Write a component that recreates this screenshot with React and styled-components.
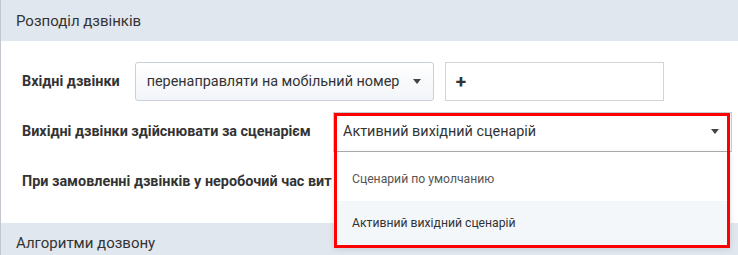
import React from "react";
import styled, { createGlobalStyle } from "styled-components";

const Global = createGlobalStyle`
  html, body { margin: 0; padding: 0; background: #fff; }
  body { font-family: Roboto, "Noto Sans", sans-serif; color: #333; }
  * { box-sizing: border-box; }
`;

const Page = styled.div`
  width: 738px;
  height: 255px;
  overflow: hidden;
  border-left: 1px solid #c3c8ce;
  display: flex;
  flex-direction: column;
`;

const SectionHeader = styled.div`
  height: ${(p) => p.$h || 41}px;
  flex-shrink: 0;
  background: #e1e7ef;
  display: flex;
  align-items: center;
  padding-left: 15px;
  font-size: 15px;
  color: #333;
`;

const Body = styled.div`
  width: 737px;
  padding: 21px 6px 22px 21px;
  display: flex;
  flex-direction: column;
  gap: 11px;
`;

const Row = styled.div`
  display: flex;
  align-items: center;
  height: 39px;
  position: relative;
`;

const Label = styled.div`
  font-size: 14.4px;
  font-weight: 700;
  color: #333;
  white-space: nowrap;
  margin-right: ${(p) => p.$mr || 0}px;
  ${(p) => (p.$clip ? `width: ${p.$clip}px; overflow: hidden;` : "")}
`;

const Caret = styled.span`
  flex-shrink: 0;
  width: 0;
  height: 0;
  border-left: 4.5px solid transparent;
  border-right: 4.5px solid transparent;
  border-top: 5px solid #444;
`;

const GradientSelect = styled.div`
  flex: 0 0 299px;
  height: 39px;
  border: 1px solid #c9d0d8;
  border-radius: 3px;
  background: linear-gradient(#ffffff, #f2f5f8);
  display: flex;
  align-items: center;
  justify-content: space-between;
  padding: 0 12px 0 11px;
  font-size: 14.4px;
  color: #333;
  margin-right: 11px;
`;

const TextInput = styled.div`
  flex: 0 0 219px;
  height: 39px;
  border: 1px solid #d2d4d6;
  display: flex;
  align-items: center;
  padding-left: 10px;
  font-size: 19px;
  font-weight: 700;
  color: #333;
`;

const SelectWrap = styled.div`
  position: relative;
  flex: 0 0 399px;
  height: 40px;
  margin-left: auto;
`;

const PlainSelect = styled.div`
  height: 40px;
  border: 1px solid #c8ccd0;
  border-bottom-color: #a9adb2;
  background: #fff;
  display: flex;
  align-items: center;
  justify-content: space-between;
  padding: 0 12px 0 9px;
  font-size: 14.4px;
  color: #333;
`;

const Menu = styled.div`
  position: absolute;
  top: 40px;
  left: 1px;
  right: 2px;
  background: #fff;
  padding: 5px 0 2px;
  box-shadow: 0 2px 6px rgba(0, 0, 0, 0.12);
  z-index: 2;
`;

const MenuItem = styled.div`
  height: 44px;
  display: flex;
  align-items: center;
  padding-left: 18px;
  font-size: 12.2px;
  color: ${(p) => (p.$active ? "#333" : "#555")};
  background: ${(p) => (p.$active ? "#f4f7fa" : "#fff")};
`;

const Highlight = styled.div`
  position: absolute;
  left: 1px;
  top: 1px;
  width: 396px;
  height: 135px;
  border: 3px solid #ff0000;
  z-index: 3;
  pointer-events: none;
`;

export default function App() {
  return (
    <>
      <Global />
      <Page>
        <SectionHeader>Розподіл дзвінків</SectionHeader>
        <Body>
          <Row>
            <Label $mr={15}>Вхідні дзвінки</Label>
            <GradientSelect>
              <span>перенаправляти на мобільний номер</span>
              <Caret />
            </GradientSelect>
            <TextInput>+</TextInput>
          </Row>
          <Row>
            <Label>Вихідні дзвінки здійснювати за сценарієм</Label>
            <SelectWrap>
              <PlainSelect>
                <span>Активний вихідний сценарій</span>
                <Caret />
              </PlainSelect>
              <Menu>
                <MenuItem>Сценарий по умолчанию</MenuItem>
                <MenuItem $active>Активний вихідний сценарій</MenuItem>
              </Menu>
              <Highlight />
            </SelectWrap>
          </Row>
          <Row>
            <Label $clip={310}>При замовленні дзвінків у неробочий час витрачати</Label>
          </Row>
        </Body>
        <SectionHeader $h={40}>Алгоритми дозвону</SectionHeader>
      </Page>
    </>
  );
}
